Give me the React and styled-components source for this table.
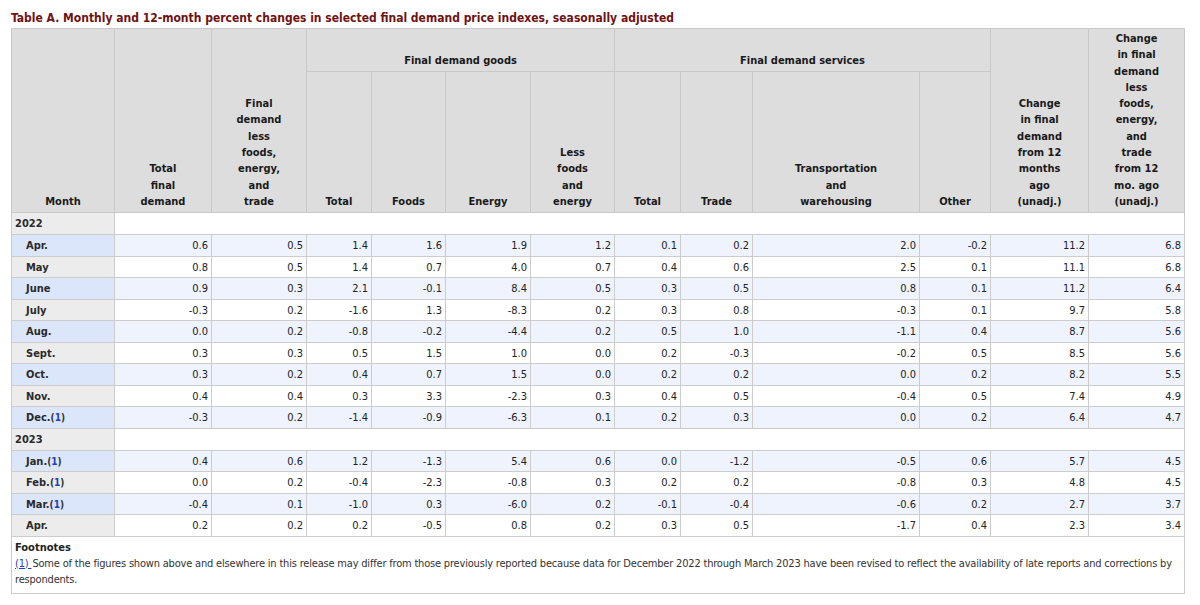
import React from 'react';
import styled, { createGlobalStyle } from 'styled-components';

const GlobalStyle = createGlobalStyle`
  body {
    margin: 0;
    background: #ffffff;
    font-family: "DejaVu Sans Condensed", "DejaVu Sans", sans-serif;
    color: #222222;
  }
`;

const Page = styled.div`
  padding: 10px 15px 0 11px;
`;

const Title = styled.h3`
  margin: 0 0 2px 0;
  font-size: 12px;
  line-height: 16px;
  font-weight: bold;
  color: #6e1212;
`;

const Table = styled.table`
  width: 1174px;
  table-layout: fixed;
  border-collapse: collapse;
  font-size: 11px;
`;

const HeadRow = styled.tr`
  height: ${(p) => p.$h}px;
`;

const HeadCell = styled.th`
  background: #dddddd;
  border: 1px solid #c8c8c8;
  padding: 2px 4px;
  line-height: 16.3px;
  font-weight: bold;
  color: #1a1a1a;
  text-align: center;
  vertical-align: bottom;
`;

const BodyRow = styled.tr`
  height: ${(p) => (p.$year ? 22 : 21.5)}px;
`;

const MonthCell = styled.th`
  background: ${(p) => (p.$blue ? '#dce6fa' : '#ececec')};
  border: 1px solid #cccccc;
  padding: 0 3px 0 ${(p) => (p.$year ? 3 : 14)}px;
  text-align: left;
  font-weight: bold;
  color: #2a2a2a;
  white-space: nowrap;
`;

const YearFill = styled.td`
  background: #ffffff;
  border: 1px solid #cccccc;
`;

const NumCell = styled.td`
  background: ${(p) => (p.$blue ? '#eef3fd' : '#ffffff')};
  border: 1px solid #cccccc;
  padding: 0 3px;
  text-align: right;
  color: #222222;
`;

const Note = styled.span`
  font-size: 10px;
  font-weight: bold;
  color: #333333;

  a {
    color: #1a3fc0;
    text-decoration: none;
  }
`;

const FootCell = styled.td`
  border: 1px solid #cccccc;
  padding: 3px 3px 5px 3px;
  line-height: 16px;
  color: #333333;
`;

const FootTitle = styled.div`
  font-weight: bold;
  color: #222222;
`;

const FootText = styled.div`
  letter-spacing: -0.19px;
`;

const FootLink = styled.a`
  color: #1a3fc0;
  text-decoration: underline;
  margin-right: 1px;
`;

const widths = [103, 97, 95, 65, 74, 85, 84, 66, 72, 167, 71, 98, 96];

const rows2022 = [
  ['Apr.', '0.6', '0.5', '1.4', '1.6', '1.9', '1.2', '0.1', '0.2', '2.0', '-0.2', '11.2', '6.8'],
  ['May', '0.8', '0.5', '1.4', '0.7', '4.0', '0.7', '0.4', '0.6', '2.5', '0.1', '11.1', '6.8'],
  ['June', '0.9', '0.3', '2.1', '-0.1', '8.4', '0.5', '0.3', '0.5', '0.8', '0.1', '11.2', '6.4'],
  ['July', '-0.3', '0.2', '-1.6', '1.3', '-8.3', '0.2', '0.3', '0.8', '-0.3', '0.1', '9.7', '5.8'],
  ['Aug.', '0.0', '0.2', '-0.8', '-0.2', '-4.4', '0.2', '0.5', '1.0', '-1.1', '0.4', '8.7', '5.6'],
  ['Sept.', '0.3', '0.3', '0.5', '1.5', '1.0', '0.0', '0.2', '-0.3', '-0.2', '0.5', '8.5', '5.6'],
  ['Oct.', '0.3', '0.2', '0.4', '0.7', '1.5', '0.0', '0.2', '0.2', '0.0', '0.2', '8.2', '5.5'],
  ['Nov.', '0.4', '0.4', '0.3', '3.3', '-2.3', '0.3', '0.4', '0.5', '-0.4', '0.5', '7.4', '4.9'],
  ['Dec.*', '-0.3', '0.2', '-1.4', '-0.9', '-6.3', '0.1', '0.2', '0.3', '0.0', '0.2', '6.4', '4.7'],
];

const rows2023 = [
  ['Jan.*', '0.4', '0.6', '1.2', '-1.3', '5.4', '0.6', '0.0', '-1.2', '-0.5', '0.6', '5.7', '4.5'],
  ['Feb.*', '0.0', '0.2', '-0.4', '-2.3', '-0.8', '0.3', '0.2', '0.2', '-0.8', '0.3', '4.8', '4.5'],
  ['Mar.*', '-0.4', '0.1', '-1.0', '0.3', '-6.0', '0.2', '-0.1', '-0.4', '-0.6', '0.2', '2.7', '3.7'],
  ['Apr.', '0.2', '0.2', '0.2', '-0.5', '0.8', '0.2', '0.3', '0.5', '-1.7', '0.4', '2.3', '3.4'],
];

const Lines = ({ text }) =>
  text.split('|').map((line, i) => (
    <React.Fragment key={i}>
      {i > 0 && <br />}
      {line}
    </React.Fragment>
  ));

const MonthLabel = ({ label }) => {
  if (!label.endsWith('*')) return label;
  return (
    <>
      {label.slice(0, -1)}
      <Note>
        (<a href="#fn1">1</a>)
      </Note>
    </>
  );
};

const YearGroup = ({ year, rows }) => (
  <>
    <BodyRow $year>
      <MonthCell $year>{year}</MonthCell>
      <YearFill colSpan={12} />
    </BodyRow>
    {rows.map((row, i) => {
      const blue = i % 2 === 0;
      return (
        <BodyRow key={year + row[0]}>
          <MonthCell $blue={blue}>
            <MonthLabel label={row[0]} />
          </MonthCell>
          {row.slice(1).map((v, j) => (
            <NumCell key={j} $blue={blue}>
              {v}
            </NumCell>
          ))}
        </BodyRow>
      );
    })}
  </>
);

const App = () => {
  return (
    <Page>
      <GlobalStyle />
      <Title>
        Table A. Monthly and 12-month percent changes in selected final demand price indexes, seasonally adjusted
      </Title>
      <Table>
        <colgroup>
          {widths.map((w, i) => (
            <col key={i} style={{ width: w }} />
          ))}
        </colgroup>
        <thead>
          <HeadRow $h={43}>
            <HeadCell rowSpan={2}>Month</HeadCell>
            <HeadCell rowSpan={2}>
              <Lines text="Total|final|demand" />
            </HeadCell>
            <HeadCell rowSpan={2}>
              <Lines text="Final|demand|less|foods,|energy,|and|trade" />
            </HeadCell>
            <HeadCell colSpan={4}>Final demand goods</HeadCell>
            <HeadCell colSpan={4}>Final demand services</HeadCell>
            <HeadCell rowSpan={2}>
              <Lines text="Change|in final|demand|from 12|months|ago|(unadj.)" />
            </HeadCell>
            <HeadCell rowSpan={2}>
              <Lines text="Change|in final|demand|less|foods,|energy,|and|trade|from 12|mo. ago|(unadj.)" />
            </HeadCell>
          </HeadRow>
          <HeadRow $h={141}>
            <HeadCell>Total</HeadCell>
            <HeadCell>Foods</HeadCell>
            <HeadCell>Energy</HeadCell>
            <HeadCell>
              <Lines text="Less|foods|and|energy" />
            </HeadCell>
            <HeadCell>Total</HeadCell>
            <HeadCell>Trade</HeadCell>
            <HeadCell>
              <Lines text="Transportation|and|warehousing" />
            </HeadCell>
            <HeadCell>Other</HeadCell>
          </HeadRow>
        </thead>
        <tbody>
          <YearGroup year="2022" rows={rows2022} />
          <YearGroup year="2023" rows={rows2023} />
        </tbody>
        <tfoot>
          <tr>
            <FootCell colSpan={13}>
              <FootTitle>Footnotes</FootTitle>
              <FootText>
                <FootLink href="#fn1" id="fn1">(1)&nbsp;</FootLink>
                Some of the figures shown above and elsewhere in this release may differ from those previously reported
                because data for December 2022 through March 2023 have been revised to reflect the availability of late
                reports and corrections by respondents.
              </FootText>
            </FootCell>
          </tr>
        </tfoot>
      </Table>
    </Page>
  );
};

export default App;
